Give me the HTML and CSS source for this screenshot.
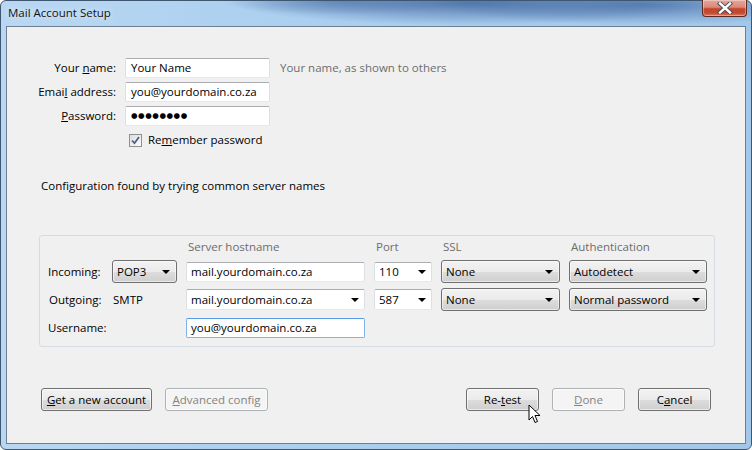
FILE: index.html
```html
<!DOCTYPE html>
<html>
<head>
<meta charset="utf-8">
<link rel="stylesheet" href="styles.css">
</head>
<body>
<div class="window">
  <div class="titlebar">
    <span class="title">Mail Account Setup</span>
    <span class="close"><svg width="16" height="12" viewBox="0 0 16 12"><path d="M3 1.5 L13 10.5 M13 1.5 L3 10.5" stroke="#3b4a5c" stroke-width="4.2" stroke-linecap="square"/><path d="M3 1.5 L13 10.5 M13 1.5 L3 10.5" stroke="#fff" stroke-width="2.4" stroke-linecap="square"/></svg></span>
  </div>
  <div class="client">
    <div class="identity">
      <label class="lbl">Your <u>n</u>ame:</label>
      <div class="field">Your Name</div>
      <span class="hint">Your name, as shown to others</span>
      <label class="lbl">Emai<u>l</u> address:</label>
      <div class="field">you@yourdomain.co.za</div>
      <span></span>
      <label class="lbl"><u>P</u>assword:</label>
      <div class="field dots">&#9679;&#9679;&#9679;&#9679;&#9679;&#9679;&#9679;&#9679;</div>
      <span></span>
      <span></span>
      <div class="remember"><span class="check"><svg width="9" height="9" viewBox="0 0 9 9"><path d="M1 4.5 L3.5 7.2 L8 1" fill="none" stroke="#4b5f8a" stroke-width="1.8"/></svg></span><span>Re<u>m</u>ember password</span></div>
    </div>

    <p class="status">Configuration found by trying common server names</p>

    <div class="server-box">
      <span></span><span></span>
      <span class="head">Server hostname</span>
      <span class="head">Port</span>
      <span class="head">SSL</span>
      <span class="head">Authentication</span>

      <span class="rlabel">Incoming:</span>
      <div class="select">POP3<i class="arrow"></i></div>
      <div class="field">mail.yourdomain.co.za</div>
      <div class="field combo">110<i class="arrow"></i></div>
      <div class="select">None<i class="arrow"></i></div>
      <div class="select">Autodetect<i class="arrow"></i></div>

      <span class="rlabel out">Outgoing:</span>
      <span class="smtp">SMTP</span>
      <div class="field combo tall">mail.yourdomain.co.za<i class="arrow"></i></div>
      <div class="field combo tall">587<i class="arrow"></i></div>
      <div class="select">None<i class="arrow"></i></div>
      <div class="select">Normal password<i class="arrow"></i></div>

      <span class="rlabel">Username:</span>
      <span></span>
      <div class="field focus">you@yourdomain.co.za</div>
    </div>

    <div class="buttons">
      <div class="group">
        <button class="btn get"><u>G</u>et a new account</button>
        <button class="btn adv" disabled><u>A</u>dvanced config</button>
      </div>
      <div class="group">
        <button class="btn">Re-<u>t</u>est</button>
        <button class="btn" disabled><u>D</u>one</button>
        <button class="btn">C<u>a</u>ncel</button>
      </div>
    </div>
  </div>
  <svg class="cursor" width="16" height="22" viewBox="0 0 16 22"><path d="M1 1 L1 16 L4.5 12.5 L7 18.5 L9.5 17.5 L7 11.5 L12 11.5 Z" fill="#fff" stroke="#000" stroke-width="1" stroke-linejoin="round"/></svg>
</div>
</body>
</html>
```

FILE: styles.css
```css
html, body {
  margin: 0;
  padding: 0;
}
body {
  width: 752px;
  height: 450px;
  overflow: hidden;
  font-family: "Open Sans", "Noto Sans", sans-serif;
  font-size: 11.5px;
  line-height: 16px;
  color: #000;
}
.window {
  position: relative;
  width: 752px;
  height: 450px;
  box-sizing: border-box;
  background:
    radial-gradient(ellipse 240px 22px at 470px 2px, rgba(72,110,165,0.9), rgba(72,110,165,0) 100%),
    radial-gradient(ellipse 200px 20px at 640px 4px, rgba(80,118,172,0.85), rgba(80,118,172,0) 100%),
    radial-gradient(ellipse 120px 14px at 340px 0px, rgba(90,130,180,0.7), rgba(90,130,180,0) 100%),
    linear-gradient(to right, #b9d7f2 0%, #abcfef 40%, #a2c7ea 100%);
  border: 1px solid #3e5670;
  border-radius: 6px;
  display: flex;
  flex-direction: column;
}
.titlebar {
  height: 25px;
  flex: none;
  display: flex;
  justify-content: space-between;
  align-items: flex-start;
  padding: 0 4px 0 7px;
}
.title {
  margin-top: 4px;
  font-size: 11.5px;
  line-height: 16px;
  color: #111;
  text-shadow: 0 0 6px rgba(255,255,255,0.95);
}
.close {
  width: 45px;
  height: 17px;
  box-sizing: border-box;
  margin-top: -1px;
  border: 1px solid #5a2a22;
  border-top: none;
  border-radius: 0 0 4px 4px;
  background: linear-gradient(to bottom, #e8a597 0%, #d98a78 45%, #c2462c 55%, #c24a2e 80%, #d77a5f 100%);
  display: flex;
  align-items: center;
  justify-content: center;
  box-shadow: inset 0 0 0 1px rgba(255,255,255,0.35);
}
.client {
  margin: 0 5px;
  height: 418px;
  box-sizing: border-box;
  border: 1px solid #6f7f92;
  background: #f0f0f0;
  padding: 31px 34px 0 32px;
}
.identity {
  display: grid;
  grid-template-columns: 87px 145px auto;
  column-gap: 9px;
  row-gap: 4px;
  align-items: center;
  margin-left: -10px;
}
.identity .hint { margin-left: 1px; }
.lbl {
  text-align: right;
  white-space: nowrap;
}
.field {
  height: 20px;
  box-sizing: border-box;
  background: #fff;
  border: 1px solid #dbdfe6;
  border-top-color: #abadb3;
  border-bottom-color: #e3e9ef;
  border-radius: 2px;
  padding: 0 5px;
  display: flex;
  align-items: center;
  white-space: nowrap;
  position: relative;
}
.dots {
  font-family: "DejaVu Sans", sans-serif;
  font-size: 7.5px;
  letter-spacing: 0.55px;
  padding-left: 5px;
}
.hint {
  color: #6d6d6d;
}
.remember {
  grid-column: 2 / 4;
  display: flex;
  align-items: center;
  gap: 6px;
  margin-top: 2px;
  margin-left: 4px;
}
.check {
  width: 11px;
  height: 11px;
  border: 1px solid #8e8f8f;
  background: linear-gradient(135deg, #dedede, #fbfbfb);
  display: flex;
  align-items: center;
  justify-content: center;
}
.status {
  margin: 30px 0 0 2px;
}
.server-box {
  margin-top: 41px;
  width: 676px;
  height: 112px;
  box-sizing: border-box;
  border: 1px solid #d5dbe3;
  border-radius: 3px;
  padding: 3px 0 0 8px;
  display: grid;
  grid-template-columns: 55px 65px 179px 58px 119px 138px;
  grid-template-rows: 16px 23px 23px 23px;
  column-gap: 9px;
  row-gap: 5px;
  align-items: center;
}
.server-box .field {
  padding: 0 4px;
}
.server-box .field.tall {
  height: 21px;
}
.head {
  color: #6d6d6d;
  padding-left: 2px;
}
.rlabel.out { padding-left: 1px; }
.smtp { padding-left: 1px; }
.select {
  height: 23px;
  box-sizing: border-box;
  border: 1px solid #707070;
  border-radius: 3px;
  background: linear-gradient(to bottom, #f2f2f2 0%, #ebebeb 50%, #dddddd 51%, #cfcfcf 100%);
  padding: 0 4px;
  display: flex;
  align-items: center;
  position: relative;
  box-shadow: inset 0 0 0 1px rgba(255,255,255,0.55);
}
.arrow {
  position: absolute;
  right: 6px;
  top: 50%;
  margin-top: -2px;
  width: 0;
  height: 0;
  border-left: 4px solid transparent;
  border-right: 4px solid transparent;
  border-top: 4px solid #000;
}
.combo .arrow { right: 5px; }
.focus {
  border-color: #7eb4ea;
  border-top-color: #569de5;
}
.buttons {
  margin-top: 41px;
  display: flex;
  justify-content: space-between;
  padding-left: 2px;
}
.group {
  display: flex;
  gap: 13px;
}
.btn {
  font-family: inherit;
  font-size: 11.5px;
  height: 23px;
  width: 73px;
  box-sizing: border-box;
  border: 1px solid #707070;
  border-radius: 3px;
  background: linear-gradient(to bottom, #f2f2f2 0%, #ebebeb 50%, #dddddd 51%, #cfcfcf 100%);
  color: #000;
  padding: 0;
  box-shadow: inset 0 0 0 1px rgba(255,255,255,0.6);
}
.btn.get { width: 111px; }
.btn.adv { width: 103px; }
.btn:disabled {
  border-color: #adb2b5;
  background: #f4f4f4;
  color: #838383;
}
.cursor {
  position: absolute;
  left: 527px;
  top: 403px;
}
```
